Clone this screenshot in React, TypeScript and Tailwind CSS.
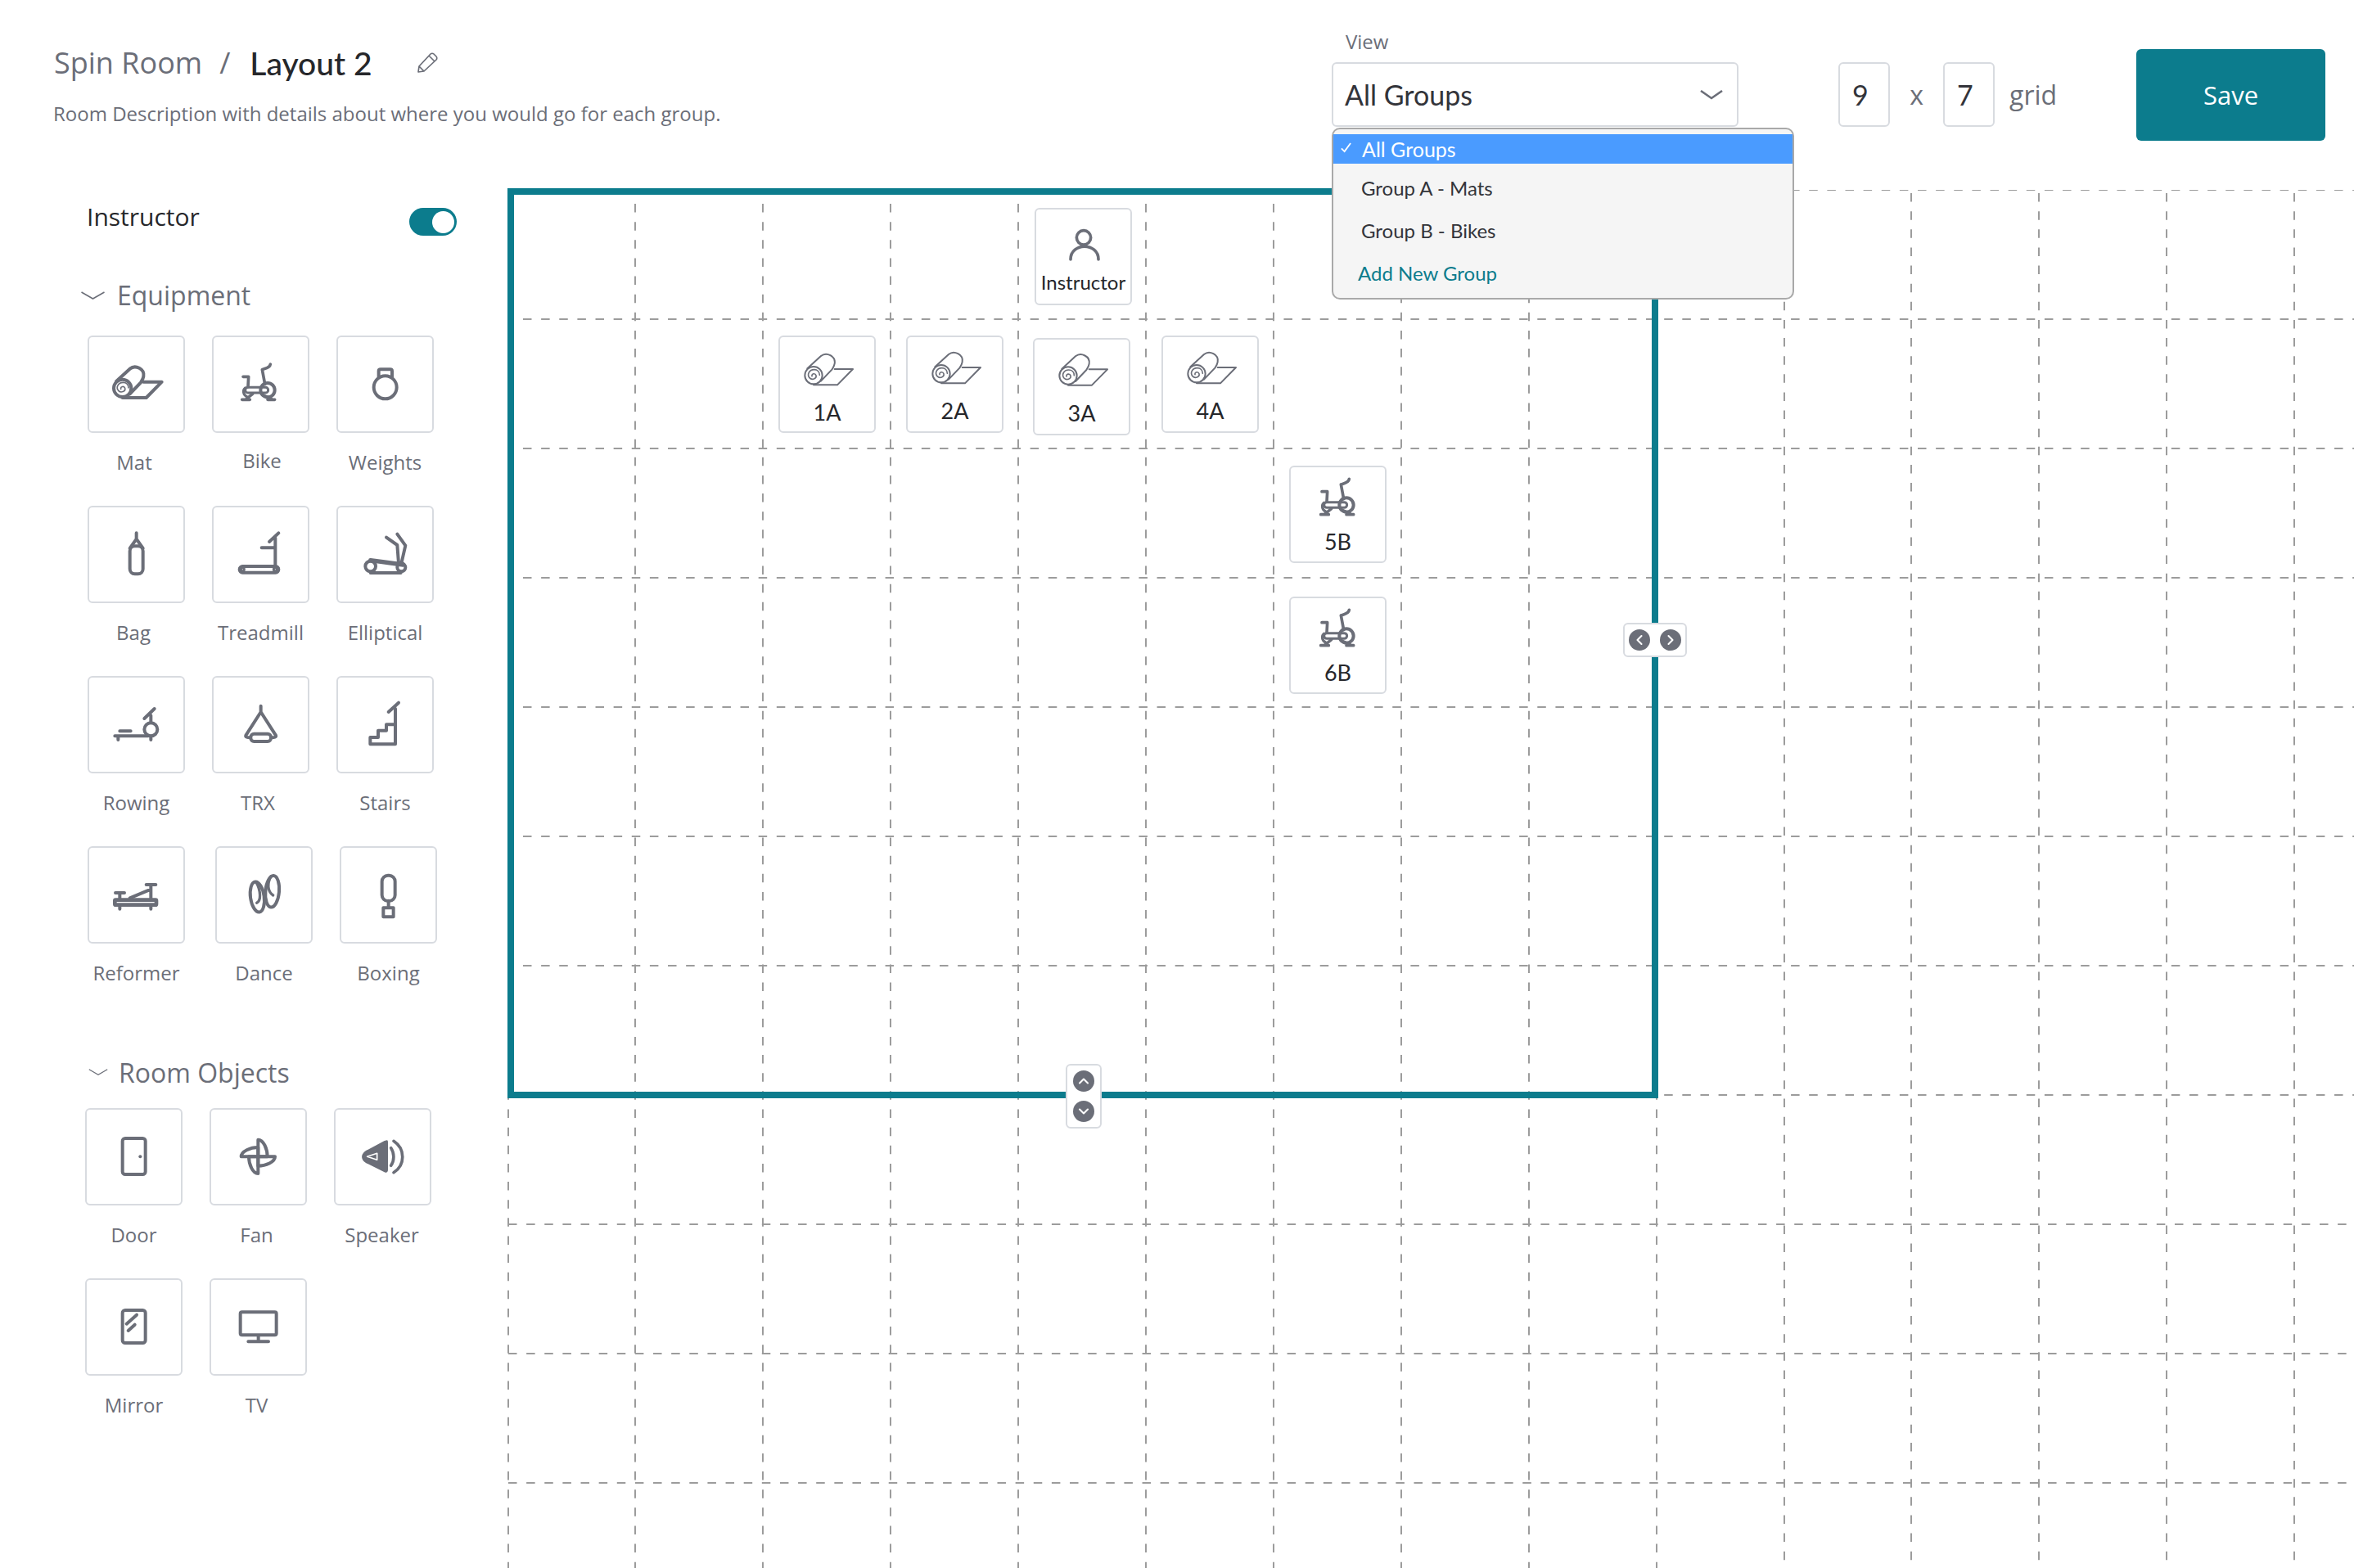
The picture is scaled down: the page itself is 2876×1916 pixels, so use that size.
import type { ReactNode } from "react";
import { ChevronDown, ChevronLeft, ChevronRight, ChevronUp } from "lucide-react";

// Icons are drawn on a 357 unit tile (3 units = 1px), so the sidebar and the canvas share them
const MatIcon = ({ bold }: { bold?: boolean }) => (
  <g strokeWidth={bold ? 12 : 6}>
    <circle cx="128" cy="193" r="32" />
    <path d="M105 168L155 122C175 106 210 122 205 150C204 158 200 164 195 172L155 214" />
    <path d="M205 170H272L215 228H128" />
    <path
      d="M122 196C120 186 134 184 137 193C140 205 122 212 113 202C103 190 112 172 130 172C142 172 150 180 150 192"
      strokeWidth="5"
      stroke="#6b6e78"
    />
  </g>
);

const BikeIcon = () => (
  <g strokeWidth="12">
    <path d="M214 105C212 120 195 120 184 125L194 178" strokeWidth="11" />
    <circle cx="204" cy="200" r="26" />
    <path d="M114 151H134L132 188" strokeWidth="11" />
    <rect x="122" y="190" width="84" height="20" rx="10" strokeWidth="9" />
    <path d="M110 235H139M204 235H230M126 232L149 214M218 232L186 218" strokeWidth="11" />
    <path d="M122 192C112 200 114 218 128 224" strokeWidth="10" />
  </g>
);

const WeightsIcon = () => (
  <g strokeWidth="12">
    <circle cx="179" cy="190" r="42" />
    <path d="M155 152V130C155 125 158 124 162 124H197C202 124 204 125 204 130V152" />
  </g>
);

const BagIcon = () => (
  <g strokeWidth="12">
    <rect x="155" y="148" width="48" height="102" rx="18" />
    <path d="M179 100V126M179 122L155 156M179 122L203 156" />
  </g>
);

const TreadmillIcon = () => (
  <g strokeWidth="12">
    <rect x="101" y="222" width="143" height="23" rx="11" />
    <circle cx="112" cy="233" r="6" strokeWidth="9" />
    <circle cx="232" cy="233" r="6" strokeWidth="9" />
    <path d="M232 218V118M182 154H232M210 132L244 100" />
  </g>
);

const EllipticalIcon = () => (
  <g strokeWidth="12">
    <circle cx="125" cy="222" r="19" />
    <circle cx="238" cy="226" r="15" />
    <path d="M125 200L244 216" strokeWidth="16" />
    <path d="M125 246H236" strokeWidth="12" />
    <path d="M223 104L253 146L238 212M183 116L223 144L228 210" />
  </g>
);

const RowingIcon = () => (
  <g strokeWidth="12">
    <path d="M100 220H222M112 222V234M232 222V234M118 202H158" />
    <circle cx="232" cy="196" r="24" />
    <path d="M232 145V172M208 156L245 120" />
  </g>
);

const TrxIcon = () => (
  <g strokeWidth="12">
    <path d="M179 110V132L124 218C122 224 130 226 140 226M179 132L234 218C236 224 228 226 218 226" />
    <rect x="142" y="212" width="74" height="28" rx="12" />
  </g>
);

const StairsIcon = () => (
  <g strokeWidth="12">
    <path d="M124 250V225H153V200H183V178H216V120M191 132L228 98M124 250H216V175" />
  </g>
);

const ReformerIcon = () => (
  <g strokeWidth="12">
    <rect x="100" y="197" width="152" height="18" rx="3" strokeWidth="14" />
    <path d="M118 222V230M232 222V230M118 171V192M102 171H135M232 141V192M215 141H250M155 190L232 158" />
  </g>
);

const DanceIcon = () => (
  <g strokeWidth="12">
    <ellipse cx="154" cy="186" rx="25" ry="56" transform="rotate(-8 154 186)" />
    <ellipse cx="209" cy="166" rx="25" ry="58" transform="rotate(5 209 166)" />
    <path d="M150 132C168 165 168 200 152 208M205 110C190 135 190 165 212 180" strokeWidth="10" />
  </g>
);

const BoxingIcon = () => (
  <g strokeWidth="12">
    <rect x="155" y="107" width="48" height="94" rx="22" />
    <path d="M179 200V222" />
    <rect x="160" y="226" width="37" height="33" />
  </g>
);

const DoorIcon = () => (
  <g strokeWidth="12">
    <rect x="137" y="111" width="84" height="132" rx="10" />
    <circle cx="202" cy="178" r="6" fill="#6b6e78" stroke="none" />
  </g>
);

const FanIcon = () => (
  <g strokeWidth="12">
    {[0, 90, 180, 270].map((angle) => (
      <path
        key={angle}
        d="M178 178V116C198 116 212 150 212 178H178"
        transform={`rotate(${angle} 178 178)`}
      />
    ))}
  </g>
);

const SpeakerIcon = () => (
  <g strokeWidth="11">
    <path
      d="M194 118C198 118 198 122 198 130V226C198 234 194 238 188 236L125 205C95 192 95 165 125 152L185 120Z"
      fill="#6b6e78"
      stroke="none"
    />
    <path d="M122 178L158 166V190Z" stroke="#ffffff" strokeWidth="5" />
    <path d="M209 146C222 165 222 192 209 211M219 121C262 150 262 208 219 236" />
  </g>
);

const MirrorIcon = () => (
  <g strokeWidth="12">
    <rect x="137" y="117" width="84" height="120" rx="10" />
    <path d="M152 167L189 134M158 192L182 170" />
  </g>
);

const TvIcon = () => (
  <g strokeWidth="12">
    <rect x="113" y="124" width="132" height="84" rx="6" />
    <path d="M179 212V230M142 232H216" />
  </g>
);

const PersonIcon = () => (
  <g strokeWidth="11">
    <circle cx="180" cy="108" r="26" />
    <path d="M132 188C132 125 234 125 234 188" />
  </g>
);

function Glyph({ box, className, children }: { box: string; className: string; children: ReactNode }) {
  return (
    <svg
      viewBox={box}
      className={className}
      fill="none"
      stroke="#6b6e78"
      strokeLinecap="round"
      strokeLinejoin="round"
    >
      {children}
    </svg>
  );
}

interface PaletteItem {
  name: string;
  icon: ReactNode;
  labelClass?: string;
  itemClass?: string;
}

const equipmentRows: PaletteItem[][] = [
  [
    { name: "Mat", icon: <MatIcon bold />, labelClass: "mt-[20px] pr-[5px]" },
    { name: "Bike", icon: <BikeIcon />, labelClass: "mt-[18px] pl-[3px]" },
    { name: "Weights", icon: <WeightsIcon /> },
  ],
  [
    { name: "Bag", icon: <BagIcon />, labelClass: "mt-[20px] pr-[7px]" },
    { name: "Treadmill", icon: <TreadmillIcon /> },
    { name: "Elliptical", icon: <EllipticalIcon /> },
  ],
  [
    { name: "Rowing", icon: <RowingIcon /> },
    { name: "TRX", icon: <TrxIcon />, labelClass: "mt-[20px] pr-[7px]" },
    { name: "Stairs", icon: <StairsIcon /> },
  ],
  [
    { name: "Reformer", icon: <ReformerIcon /> },
    { name: "Dance", icon: <DanceIcon />, itemClass: "ml-[4px]" },
    { name: "Boxing", icon: <BoxingIcon /> },
  ],
];

const roomRows: PaletteItem[][] = [
  [
    { name: "Door", icon: <DoorIcon /> },
    { name: "Fan", icon: <FanIcon />, labelClass: "mt-[20px] pr-[4px]" },
    { name: "Speaker", icon: <SpeakerIcon />, labelClass: "mt-[20px] pr-[2px]" },
  ],
  [
    { name: "Mirror", icon: <MirrorIcon /> },
    { name: "TV", icon: <TvIcon />, labelClass: "mt-[20px] pr-[4px]" },
  ],
];

// Placed tiles on the free canvas; viewBox crops lift the shared icons to the top of the tile
const placedTiles = [
  { label: "Instructor", pos: "left-[644px] top-[22px]", box: "6 5 345 222", icon: <PersonIcon />, text: "-mt-[1px] text-[24px]" },
  { label: "1A", pos: "left-[331px] top-[178px]", box: "5 53 345 222", icon: <MatIcon />, text: "mt-[2px] text-[27px]" },
  { label: "2A", pos: "left-[487px] top-[178px]", box: "5 59 345 222", icon: <MatIcon />, text: "text-[27px]" },
  { label: "3A", pos: "left-[642px] top-[181px]", box: "5 61 345 222", icon: <MatIcon />, text: "text-[27px]" },
  { label: "4A", pos: "left-[799px] top-[178px]", box: "5 59 345 222", icon: <MatIcon />, text: "text-[27px]" },
  { label: "5B", pos: "left-[955px] top-[337px]", box: "0 62 345 222", icon: <BikeIcon />, text: "mt-[1px] text-[27px]" },
  { label: "6B", pos: "left-[955px] top-[497px]", box: "0 62 345 222", icon: <BikeIcon />, text: "mt-[1px] text-[27px]" },
];

const columnLines = [621, 776, 932, 1088, 1244, 1400, 1556, 1712, 1868, 2024, 2180, 2335, 2491, 2647, 2803];
const rowLines = [232, 390, 548, 706, 864, 1022, 1180, 1338, 1496, 1654, 1812];

function Palette({ rows }: { rows: PaletteItem[][] }) {
  return (
    <div className="flex flex-col gap-[37px]">
      {rows.map((row, index) => (
        <div key={index} className="flex gap-[33px]">
          {row.map((item) => (
            <div key={item.name} className={`w-[119px] shrink-0 ${item.itemClass ?? ""}`}>
              <div className="w-[119px] h-[119px] bg-white border-2 border-[#d8dbe0] rounded-[6px] overflow-hidden">
                <Glyph box="6 6 345 345" className="w-full h-full">
                  {item.icon}
                </Glyph>
              </div>
              <div className={`text-center text-[24px] leading-[32px] text-[#6b6e78] whitespace-nowrap ${item.labelClass ?? "mt-[20px]"}`}>
                {item.name}
              </div>
            </div>
          ))}
        </div>
      ))}
    </div>
  );
}

function SectionHeading({ title, chevron, className }: { title: string; chevron: string; className: string }) {
  return (
    <div className={`flex items-start text-[32px] leading-[44px] text-[#6b6e78] ${className}`}>
      <svg viewBox="0 0 30 10" className={chevron} fill="none" stroke="#6b6e78" strokeWidth="1.6">
        <path d="M1 1L15 9L29 1" />
      </svg>
      {title}
    </div>
  );
}

function GridField({ value }: { value: string }) {
  return (
    <div className="w-[63px] h-[79px] border-2 border-[#d8dbe0] rounded-[6px] bg-white font-['Lato'] text-[34px] leading-[75px] text-[#33343a] pl-[15px]">
      {value}
    </div>
  );
}

export default function App() {
  return (
    <div className="w-[2876px] h-[1916px] bg-white overflow-hidden flex flex-col font-['Open_Sans',sans-serif]">
      <header className="h-[232px] shrink-0 flex items-start relative z-20">
        <div className="w-[1627px] shrink-0 pl-[66px] pt-[52px]">
          <div className="flex items-center h-[50px] text-[36px] leading-[50px]">
            <span className="text-[#6b6e78]">Spin Room</span>
            <span className="text-[#6b6e78] ml-[21px]">/</span>
            <span className="ml-[24px] font-['Lato'] font-medium text-[#26272b] text-[39px]">Layout 2</span>
            <svg viewBox="0 0 26 26" className="w-[26px] h-[26px] ml-[54px]" fill="none" stroke="#6b6e78" strokeWidth="1.7" strokeLinejoin="round">
              <path d="M2 24L3 17L17 2C18 1 20 1 21 2L24 5C25 6 25 8 24 9L9 23ZM3 17L9 23M15 4L22 11" />
            </svg>
          </div>
          <p className="mt-[21px] -ml-[1px] text-[24px] leading-[32px] text-[#6b6e78]">
            Room Description with details about where you would go for each group.
          </p>
        </div>

        <div className="w-[497px] shrink-0 pt-[35px]">
          <div className="pl-[17px] h-[41px] text-[24px] leading-[32px] text-[#6b6e78]">View</div>
          <div className="relative">
            <div className="h-[79px] border-2 border-[#d8dbe0] rounded-[6px] bg-white flex items-center justify-between pl-[14px] pr-[17px] font-['Lato'] text-[34px] text-[#33343a]">
              All Groups
              <svg viewBox="0 0 28 12" className="w-[28px] h-[12px]" fill="none" stroke="#6b6e78" strokeWidth="2.6">
                <path d="M1 1L14 10L27 1" />
              </svg>
            </div>
            <div className="absolute left-0 top-[80px] w-[565px] h-[210px] bg-[#f5f5f5] border-2 border-[#a9a9a9] rounded-[10px] pt-[6px] font-['Lato'] text-[24px]">
              <div className="h-[36px] bg-[#4a9bff] text-white text-[25px] flex leading-[36px] pl-[35px] relative">
                <svg viewBox="0 0 16 14" className="absolute left-[8px] top-[10px] w-[15px] h-[13px]" fill="none" stroke="#ffffff" strokeWidth="2">
                  <path d="M2 8L6 12L14 1" />
                </svg>
                All Groups
              </div>
              <div className="mt-[4px] h-[52px] leading-[52px] pl-[34px] text-[#33343a]">Group A - Mats</div>
              <div className="h-[51px] leading-[52px] pl-[34px] text-[#33343a]">Group B - Bikes</div>
              <div className="mt-[1px] h-[52px] leading-[52px] pl-[30px] text-[#0c7c8d]">Add New Group</div>
            </div>
          </div>
        </div>

        <div className="w-[486px] shrink-0 pl-[122px] pt-[76px] flex items-start">
          <GridField value="9" />
          <div className="w-[65px] text-center text-[32px] leading-[79px] text-[#6b6e78]">x</div>
          <GridField value="7" />
          <div className="ml-[18px] text-[32px] leading-[79px] text-[#6b6e78]">grid</div>
        </div>

        <button className="mt-[60px] w-[231px] h-[112px] bg-[#0c7c8d] rounded-[6px] text-white text-[31px] leading-[112px]">
          Save
        </button>
      </header>

      <div className="flex flex-1 min-h-0">
        <aside className="w-[620px] shrink-0 pt-[13px]">
          <div className="ml-[106px] w-[452px] flex items-start justify-between">
            <span className="text-[30px] leading-[40px] text-[#26272b]">Instructor</span>
            <div className="mt-[9px] w-[58px] h-[34px] rounded-full bg-[#0c7c8d] flex items-center justify-end pr-[3px]">
              <div className="w-[27px] h-[27px] rounded-full bg-white" />
            </div>
          </div>

          <SectionHeading title="Equipment" chevron="w-[31px] h-[10px] mt-[17px] mr-[14px]" className="ml-[98px] mt-[51px]" />
          <div className="ml-[107px] mt-[27px]">
            <Palette rows={equipmentRows} />
          </div>

          <SectionHeading title="Room Objects" chevron="w-[24px] h-[10px] mt-[16px] mr-[13px]" className="ml-[108px] mt-[84px]" />
          <div className="ml-[104px] mt-[21px]">
            <Palette rows={roomRows} />
          </div>
        </aside>

        <main className="relative flex-1 min-w-0">
          <svg viewBox="620 232 2256 1684" className="absolute inset-0 w-full h-full" stroke="#9c9c9c" strokeWidth="2">
            {columnLines.map((x) => (
              <line key={x} x1={x} x2={x} y1={x > 2024 ? 236 : 249} y2={1916} strokeDasharray="10.5 11.63" />
            ))}
            {rowLines.map((y) => (
              <line key={y} x1={y > 1340 ? 621 : 639} x2={2876} y1={y} y2={y} strokeDasharray="10.5 11.63" />
            ))}
          </svg>

          <div className="absolute left-0 top-[-2px] w-[1406px] h-[1112px] border-8 border-[#0c7c8d]" />

          {placedTiles.map((tile) => (
            <div
              key={tile.label}
              className={`absolute w-[119px] h-[119px] bg-white border-2 border-[#d8dbe0] rounded-[6px] overflow-hidden ${tile.pos}`}
            >
              <Glyph box={tile.box} className="w-[115px] h-[74px]">
                {tile.icon}
              </Glyph>
              <div className={`text-center font-['Lato'] leading-[32px] text-[#26272b] whitespace-nowrap ${tile.text}`}>
                {tile.label}
              </div>
            </div>
          ))}

          <div className="absolute left-[1363px] top-[529px] w-[78px] h-[42px] bg-white border-2 border-[#d8dbe0] rounded-[6px] flex items-center justify-between px-[5px]">
            <span className="w-[26px] h-[26px] rounded-full bg-[#6b6e78] flex items-center justify-center">
              <ChevronLeft size={20} color="#ffffff" strokeWidth={2.5} />
            </span>
            <span className="w-[26px] h-[26px] rounded-full bg-[#6b6e78] flex items-center justify-center">
              <ChevronRight size={20} color="#ffffff" strokeWidth={2.5} />
            </span>
          </div>

          <div className="absolute left-[682px] top-[1068px] w-[44px] h-[79px] bg-white border-2 border-[#d8dbe0] rounded-[6px] flex flex-col items-center justify-between py-[6px]">
            <span className="w-[26px] h-[26px] rounded-full bg-[#6b6e78] flex items-center justify-center">
              <ChevronUp size={20} color="#ffffff" strokeWidth={2.5} />
            </span>
            <span className="w-[26px] h-[26px] rounded-full bg-[#6b6e78] flex items-center justify-center">
              <ChevronDown size={20} color="#ffffff" strokeWidth={2.5} />
            </span>
          </div>
        </main>
      </div>
    </div>
  );
}
